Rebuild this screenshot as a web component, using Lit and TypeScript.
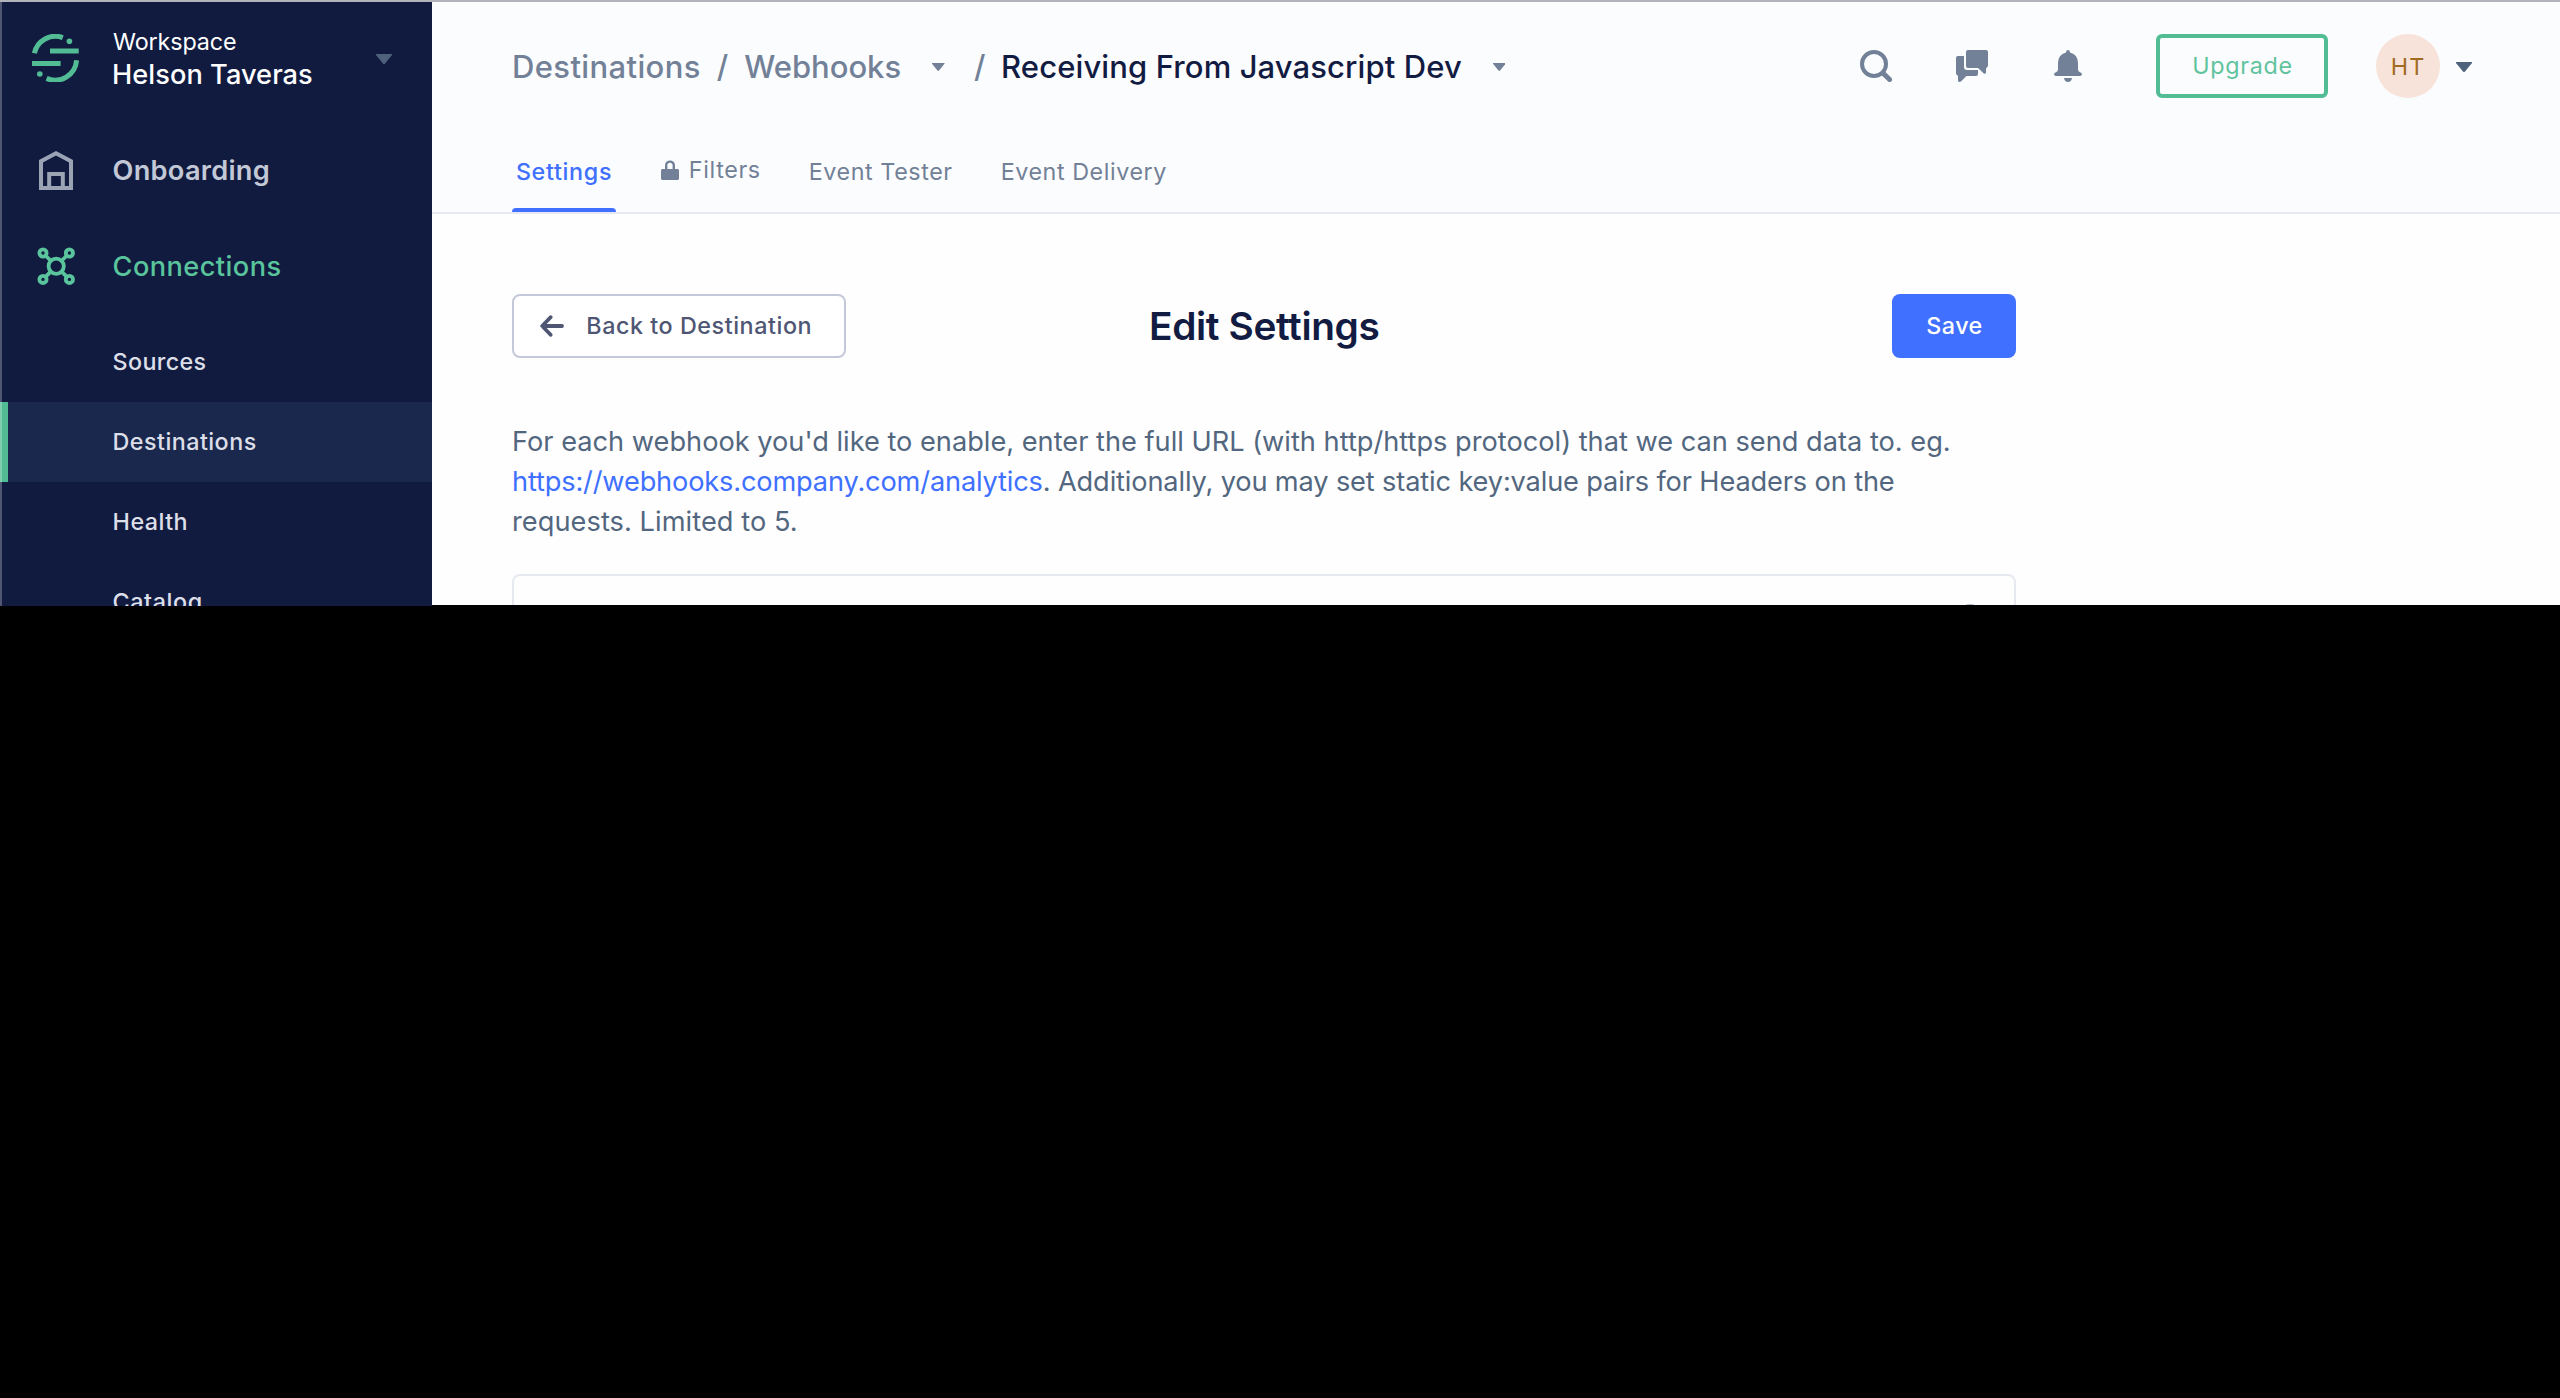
import { LitElement, html, svg, css } from "lit";
import { customElement } from "lit/decorators.js";
import { classMap } from "lit/directives/class-map.js";

const subItems = [
  { label: "Sources", cls: "sources", active: false },
  { label: "Destinations", cls: "dest", active: true },
  { label: "Health", cls: "health", active: false },
  { label: "Catalog", cls: "catalog", active: false },
];

const caret = (w: number, h: number) => html`
  <svg class="caret" width=${w} height=${h} viewBox="0 0 16 10" preserveAspectRatio="none">
    <path d="M0 0H16V1L9 9.4Q8 10.4 7 9.4L0 1Z" fill="currentColor" />
  </svg>`;

const nodes = [[7, 7], [33.4, 7], [7, 33.4], [33.4, 33.4]];

@customElement("side-nav")
export class SideNav extends LitElement {
  static styles = css`
    :host {
      display: block;
      position: relative;
      flex: none;
      width: 432px;
      height: 604px;
      overflow: hidden;
      background: #111b40;
      color: #dcdfe8;
    }
    .edge {
      position: absolute;
      inset: 0 auto 0 0;
      width: 2px;
      background: rgba(255, 255, 255, 0.26);
    }
    .workspace {
      display: flex;
      align-items: flex-start;
      height: 120px;
      box-sizing: border-box;
      padding: 24px 40px 0 32px;
      color: #fff;
    }
    .logo { margin-top: 8px; flex: none; }
    .names { margin-left: 32px; flex: 1; white-space: nowrap; }
    .small { font-size: 23.3px; line-height: 32px; letter-spacing: -0.11px; padding-left: 1px; }
    .name { font-size: 27.2px; line-height: 33px; font-weight: 500; letter-spacing: 0.05px; }
    .workspace .caret { color: #4e637b; margin-top: 28px; }
    .section {
      display: flex;
      align-items: center;
      height: 96px;
      padding-left: 36px;
      font-size: 27.2px;
      font-weight: 600;
      letter-spacing: 0.27px;
      color: #c3c8d7;
    }
    .section svg { width: 40px; height: 40px; margin-right: 36.5px; }
    .section.on { color: #5ac59c; font-weight: 500; letter-spacing: 0.44px; }
    .section .house { color: #9ba4b5; }
    .list { padding-top: 8px; }
    .item {
      display: flex;
      align-items: center;
      box-sizing: border-box;
      height: 80px;
      padding: 0 0 2px 104.6px;
      border-left: 8px solid transparent;
      font-size: 23.3px;
      font-weight: 500;
      letter-spacing: 0.46px;
    }
    .item.active { background: #1b284e; border-left-color: #52bd94; }
    .sources { letter-spacing: 0.36px; }
    .catalog { letter-spacing: 0.6px; }
  `;
  render() {
    return html`
      <div class="workspace">
        <svg class="logo" width="48" height="48" viewBox="0 0 48 48" fill="none" stroke="#52bd94" stroke-width="5">
          <path d="M2.4 19.3A21.5 21.5 0 0 1 30.8 3.6" />
          <path d="M44.6 26.3A21.5 21.5 0 0 1 14.6 44.4" />
          <path d="M18 17H46.7M0 29.4H28.6" />
          <g fill="#52bd94" stroke="none"><circle cx="37.4" cy="7.2" r="2.8" /><circle cx="7.8" cy="40" r="2.8" /></g>
        </svg>
        <div class="names">
          <div class="small">Workspace</div>
          <div class="name">Helson Taveras</div>
        </div>
        ${caret(16, 10)}
      </div>
      <div class="section">
        <svg class="house" viewBox="0 0 40 40" fill="none" stroke="currentColor" stroke-width="4">
          <path d="M5 38V11.2L20 3.2L35 11.2V38Z" />
          <path d="M13.2 38V24H26.8V38" />
        </svg>
        Onboarding
      </div>
      <div class="section on">
        <svg viewBox="0 0 40 40" fill="none" stroke="currentColor" stroke-width="3.8">
          <circle cx="20.2" cy="20.2" r="7.6" />
          ${nodes.map(([x, y]) => svg`<circle cx=${x} cy=${y} r="3.6" />`)}
          <path d="M9.5 9.5L15 15M30.9 9.5L25.4 15M9.5 30.9L15 25.4M30.9 30.9L25.4 25.4" />
        </svg>
        Connections
      </div>
      <div class="list">
        ${subItems.map((i) => html`<div class=${classMap({ item: true, active: i.active, [i.cls]: true })}>${i.label}</div>`)}
      </div>
      <div class="edge"></div>
    `;
  }
}

@customElement("page-header")
export class PageHeader extends LitElement {
  static styles = css`
    :host {
      display: flex;
      flex-direction: column;
      box-sizing: border-box;
      height: 212px;
      padding: 32px 88px 0 80px;
      border-bottom: 2px solid #e6e9f2;
      background: #fbfcfe;
      color: #728197;
      white-space: nowrap;
    }
    .bar { display: flex; align-items: center; height: 64px; }
    .crumbs { display: flex; align-items: center; flex: 1; font-size: 31px; font-weight: 500; }
    .crumbs .caret { margin: 2px 29.5px 0 31px; }
    .c1 { letter-spacing: 0.37px; }
    .c2 { letter-spacing: -0.02px; }
    .slash { margin: 0 16px; }
    .caret + .slash { margin: 0 15.5px 0 0; }
    .title { color: #121b42; letter-spacing: 0.11px; }
    .tools { display: flex; align-items: center; }
    .tools .icon { width: 32px; height: 32px; margin-right: 64px; }
    .tools .icon.bell { margin-right: 72px; }
    .upgrade {
      display: flex;
      align-items: center;
      justify-content: center;
      box-sizing: border-box;
      width: 172px;
      height: 64px;
      padding: 0 0 1px 1px;
      border: 4px solid #52bd94;
      border-radius: 6px;
      color: #5fc39d;
      font-size: 23.3px;
      letter-spacing: 0.67px;
    }
    .avatar {
      display: flex;
      align-items: center;
      justify-content: center;
      width: 64px;
      height: 64px;
      margin: 0 16px 0 48px;
      border-radius: 50%;
      background: #f7e3da;
      color: #a06c22;
      font-size: 23.3px;
      letter-spacing: 1px;
    }
    .tools .caret { color: #4e637b; margin-top: 2px; }
    .tabs { display: flex; height: 76px; margin-top: auto; font-size: 23.3px; }
    .tab {
      display: flex;
      align-items: center;
      box-sizing: border-box;
      height: 76px;
      padding-bottom: 5px;
      margin-right: 48px;
      letter-spacing: 0.57px;
    }
    .tab.filters { padding-bottom: 9px; letter-spacing: 0.65px; }
    .tab.sel {
      flex-direction: column;
      width: 104px;
      margin-right: 45px;
      padding: 0;
      color: #4070ff;
      font-weight: 500;
      letter-spacing: 0.68px;
    }
    .txt { flex: 1; display: flex; align-items: center; padding-bottom: 1px; }
    .indicator { align-self: stretch; height: 4px; border-radius: 4px 4px 0 0; background: #4070ff; }
    .lock { margin: 1px 9.8px 0 0; }
  `;
  render() {
    return html`
      <div class="bar">
        <div class="crumbs">
          <span class="c1">Destinations</span><span class="slash">/</span><span class="c2">Webhooks</span>${caret(12.5, 8)}<span
            class="slash">/</span><span class="title">Receiving From Javascript Dev</span>${caret(12.5, 8)}
        </div>
        <div class="tools">
          <svg class="icon" viewBox="0 0 32 32" fill="none" stroke="currentColor">
            <circle cx="14" cy="14" r="12" stroke-width="4" />
            <path d="M23.4 23.4L29.6 29.6" stroke-width="5" stroke-linecap="round" />
          </svg>
          <svg class="icon" viewBox="0 0 32 32" fill="currentColor">
            <path d="M12 0H30Q32 0 32 2V16L30 18.4V22.6Q29.6 24.4 27.8 23.6L22 18H12Q10 18 10 16V2Q10 0 12 0Z" />
            <path d="M2 6H8V17Q8 20 11 20H22V24Q22 26 20 26H10.4L5 31.6Q3 32.6 2 31V26L0 24V8Q0 6 2 6Z" />
          </svg>
          <svg class="icon bell" viewBox="0 0 32 32" fill="currentColor">
            <path d="M16 0Q17.8 0 18 2.4Q26 4.4 26 13V19.6Q26.2 21.8 28 22.2Q30 22.8 30 24.2Q29.8 26 28 26H4Q2.2 26 2 24.2Q2 22.8 4 22.2Q5.8 21.8 6 19.6V13Q6 4.4 14 2.4Q14.2 0 16 0Z" />
            <path d="M12 28H20Q19.4 32 16 32Q12.6 32 12 28Z" />
          </svg>
          <div class="upgrade">Upgrade</div>
          <div class="avatar">HT</div>
          ${caret(16, 10)}
        </div>
      </div>
      <div class="tabs">
        <div class="tab sel"><span class="txt">Settings</span><span class="indicator"></span></div>
        <div class="tab filters">
          <svg class="lock" width="18" height="20" viewBox="0 0 18 20">
            <rect x="0" y="9" width="18" height="11" rx="1.4" fill="currentColor" />
            <path d="M5.2 10V5.4a3.8 3.8 0 0 1 7.6 0V10" fill="none" stroke="currentColor" stroke-width="2.4" />
          </svg>
          Filters
        </div>
        <div class="tab">Event Tester</div>
        <div class="tab">Event Delivery</div>
      </div>
    `;
  }
}

@customElement("app-root")
export class AppRoot extends LitElement {
  static styles = css`
    :host {
      display: block;
      width: 2560px;
      height: 1398px;
      overflow: hidden;
      background: #000;
      font-family: Inter, "Liberation Sans", sans-serif;
    }
    .window { display: flex; border-top: 2px solid #b3b3bb; align-items: flex-start; }
    .main { flex: 1; height: 603px; overflow: hidden; background: #fefefe; }
    .content { width: 1504px; padding: 80px 0 0 80px; white-space: nowrap; }
    .top { display: flex; align-items: center; height: 64px; }
    .back {
      display: flex;
      align-items: center;
      box-sizing: border-box;
      width: 334px;
      height: 64px;
      padding: 0 0 2px 26px;
      border: 2px solid #c4c9d9;
      border-radius: 8px;
      background: #fff;
      color: #4f5674;
      font-size: 23.3px;
      font-weight: 500;
      letter-spacing: 0.56px;
    }
    .back svg { margin: 1px 22.3px 0 0; }
    h1 { margin: 0 0 0 303px; flex: 1; font-size: 38.8px; line-height: 64px; font-weight: 600; letter-spacing: -0.36px; color: #121b42; }
    .save {
      display: flex;
      align-items: center;
      justify-content: center;
      box-sizing: border-box;
      width: 124px;
      height: 64px;
      padding: 0 0 2px 1px;
      border-radius: 8px;
      background: #4070ff;
      color: #fff;
      font-size: 23.3px;
      font-weight: 500;
      letter-spacing: 0.48px;
    }
    .intro { margin: 64px 0 32px; font-size: 27.2px; line-height: 40px; color: #52677f; }
    .line { display: block; }
    .l2 { letter-spacing: -0.14px; }
    .l3 { letter-spacing: 0.06px; }
    .link { color: #4070ff; letter-spacing: -0.16px; }
    .card { height: 300px; border: 2px solid #e6e9ef; border-radius: 8px; display: flex; justify-content: flex-end; align-items: flex-start; }
    .dot { width: 24px; height: 24px; margin: 28px 32px 0 0; border-radius: 50%; background: #aab4c2; }
  `;
  render() {
    return html`
      <div class="window">
        <side-nav></side-nav>
        <div class="main">
          <page-header></page-header>
          <div class="content">
            <div class="top">
              <div class="back">
                <svg width="24" height="22" viewBox="0 0 24 22" fill="none" stroke="currentColor" stroke-width="3.8" stroke-linecap="round" stroke-linejoin="round">
                  <path d="M22 11H2.4M10.6 2.2L2.2 11L10.6 19.8" />
                </svg>
                Back to Destination
              </div>
              <h1>Edit Settings</h1>
              <div class="save">Save</div>
            </div>
            <div class="intro">
              <span class="line">For each webhook you'd like to enable, enter the full URL (with http/https protocol) that we can send data to. eg.</span>
              <span class="line l2"><span class="link">https://webhooks.company.com/analytics</span>. Additionally, you may set static key:value pairs for Headers on the</span>
              <span class="line l3">requests. Limited to 5.</span>
            </div>
            <div class="card"><div class="dot"></div></div>
          </div>
        </div>
      </div>
    `;
  }
}
